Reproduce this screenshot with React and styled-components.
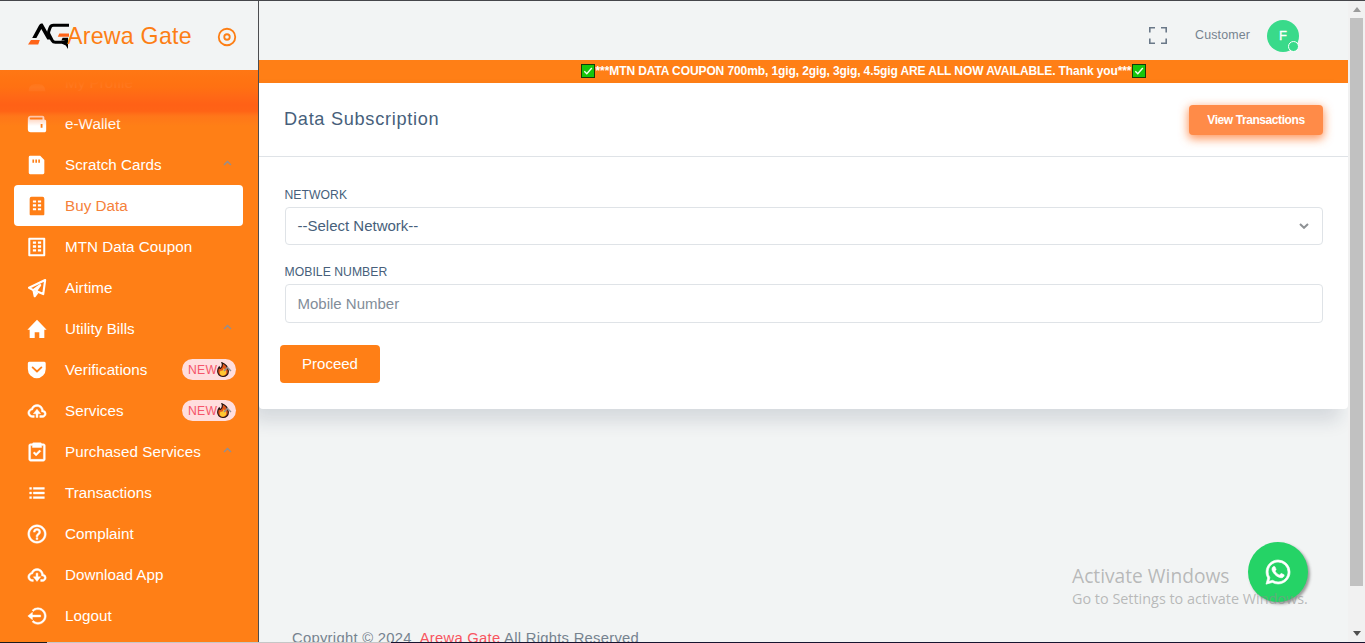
import React from 'react';
import styled, { createGlobalStyle } from 'styled-components';
import {
  BiSolidWallet, BiCloudUpload, BiCloudDownload, BiTask, BiListUl,
  BiHelpCircle, BiLogOutCircle, BiLogoWhatsapp, BiDisc, BiSolidUser,
} from 'react-icons/bi';

const Global = createGlobalStyle`
  * { box-sizing: border-box; }
  html, body { margin: 0; padding: 0; overflow: hidden; }
  body { font-family: "Liberation Sans", Arial, sans-serif; background: #f2f4f4; }
`;

const Page = styled.div`
  position: relative;
  display: flex;
  width: 1365px;
  height: 643px;
  overflow: hidden;
  background: #f2f4f4;
  border-top: 1px solid #45464a;
`;
const Sidebar = styled.aside`
  position: relative;
  z-index: 1;
  display: flex;
  flex-direction: column;
  width: 259px;
  flex: none;
  border-right: 1px solid #4c4d50;
  background: #ff7f16;
`;
const Brand = styled.div`
  display: flex;
  align-items: center;
  height: 69px;
  flex: none;
  padding: 0 20.5px 0 28px;
  background: #f2f4f4;
  color: #fd7e14;
`;
const BrandName = styled.span`
  flex: 1;
  margin-left: -2px;
  font-size: 23.2px;
  letter-spacing: 0.24px;
  line-height: 30px;
  white-space: nowrap;
`;
const ToggleSlot = styled.span`
  display: flex;
  padding-top: 2px;
`;
const MenuViewport = styled.nav`
  position: relative;
  flex: 1;
  min-height: 0;
  overflow: hidden;
`;
const MenuShade = styled.div`
  position: absolute;
  top: 0;
  left: 0;
  right: 0;
  height: 56px;
  background: linear-gradient(180deg,
    rgb(255, 119, 20) 0, rgb(255, 115, 18) 11px, rgba(255, 112, 18, 0.94) 17px, rgba(255, 104, 22, 0.98) 26px,
    rgba(255, 96, 22, 0.98) 35px, rgba(255, 97, 22, 0.92) 41px,
    rgba(255, 105, 30, 0.4) 46px, rgba(255, 127, 22, 0) 56px);
`;
const MenuList = styled.ul`
  margin: -8px 0 0;
  padding: 0 15px 0 14px;
  list-style: none;
`;
const MenuItem = styled.li`
  display: flex;
  align-items: center;
  height: 41px;
  padding: 0 7px 0 11px;
  border-radius: 4px;
  font-size: 15.2px;
  letter-spacing: 0.04px;
  color: ${p => (p.$active ? '#f5813a' : '#fff')};
  background: ${p => (p.$active ? '#fff' : 'transparent')};
  svg { flex: none; }
`;
const ItemIcon = styled.span`
  display: flex;
  width: 23px;
  justify-content: center;
  margin-right: 17px;
  color: ${p => (p.$active ? '#ff7f16' : '#fff')};
`;
const ItemLabel = styled.span`
  flex: 1;
  white-space: nowrap;
  line-height: 20px;
`;
const ChevronSlot = styled.span`
  display: flex;
  padding: 0 4px 3px 0;
`;
const NewBadge = styled.span`
  position: relative;
  display: flex;
  align-items: center;
  width: 54px;
  height: 21px;
  padding-left: 6px;
  border-radius: 11px;
  background: #ffdede;
  color: #f5566a;
  font-size: 12.2px;
  letter-spacing: 0.3px;
`;
const BadgeChevron = styled.span`
  position: absolute;
  top: 7px;
  right: 4px;
  display: flex;
`;

const Main = styled.main`
  display: flex;
  flex-direction: column;
  width: 1089px;
  flex: none;
`;
const TopBar = styled.header`
  display: flex;
  align-items: center;
  justify-content: flex-end;
  height: 59px;
  flex: none;
  padding: 10px 49px 0 0;
  color: #76838f;
`;
const Role = styled.span`
  margin: 0 17px 1px 25.5px;
  font-size: 12.4px;
  letter-spacing: 0.15px;
`;
const Avatar = styled.div`
  position: relative;
  display: grid;
  place-items: center;
  width: 32px;
  height: 32px;
  margin-top: 1px;
  padding-bottom: 2px;
  border-radius: 50%;
  background: #39da8a;
  color: #fff;
  font-size: 13px;
  -webkit-text-stroke: 0.3px #fff;
`;
const Status = styled.i`
  position: absolute;
  right: 0;
  bottom: 0;
  width: 11px;
  height: 11px;
  border: 1px solid #fff;
  border-radius: 50%;
  background: #39da8a;
`;
const Banner = styled.div`
  display: flex;
  align-items: center;
  justify-content: center;
  gap: 1px;
  height: 23px;
  flex: none;
  padding: 0 0 1px 120px;
  background: #ff7f16;
  color: #fff;
  font-size: 12px;
  font-weight: 700;
  white-space: nowrap;
`;
const BannerText = styled.span`
  letter-spacing: -0.1px;
`;
const Card = styled.section`
  height: 326px;
  flex: none;
  border-radius: 0 0 4px 4px;
  background: #fff;
  box-shadow: -8px 12px 18px 0 rgba(25, 42, 70, 0.13);
`;
const CardHeader = styled.div`
  display: flex;
  justify-content: space-between;
  align-items: flex-start;
  height: 74px;
  padding: 22px 25px 0 25px;
  border-bottom: 1px solid #dfe3e7;
`;
const CardTitle = styled.h4`
  margin: 3px 0 0;
  font-size: 18.2px;
  font-weight: 400;
  line-height: 22px;
  letter-spacing: 0.69px;
  color: #475f7b;
`;
const ViewButton = styled.button`
  width: 134px;
  height: 30px;
  padding: 0;
  border: 0;
  border-radius: 4px;
  background: #ff8b48;
  box-shadow: 0 3px 10px 1px rgba(255, 110, 30, 0.7);
  color: #fff;
  font: 700 12px "Liberation Sans", Arial, sans-serif;
  letter-spacing: -0.42px;
`;
const Form = styled.form`
  padding: 30px 25px 0 26px;
`;
const Label = styled.label`
  display: block;
  height: 20px;
  margin-left: -1px;
  padding-left: 0.5px;
  font-size: 12.2px;
  line-height: 16px;
  letter-spacing: 0.04px;
  color: #475f7b;
`;
const Field = styled.div`
  display: flex;
  align-items: center;
  justify-content: space-between;
  height: ${p => p.$height}px;
  margin-bottom: ${p => p.$gap}px;
  padding: 0 13px ${p => p.$lift || 0}px 11.5px;
  border: 1px solid #dfe3e7;
  border-radius: 4px;
  font-size: 15px;
  color: ${p => (p.$muted ? '#828d99' : '#475f7b')};
`;
const ProceedButton = styled.button`
  width: 100px;
  height: 38px;
  margin-left: -5px;
  padding: 0 0 2px;
  border: 0;
  border-radius: 4px;
  background: #ff7f16;
  color: #fff;
  font: 15px "Liberation Sans", Arial, sans-serif;
`;
const Footer = styled.footer`
  height: 14px;
  margin-top: auto;
  padding-left: 33px;
  overflow: hidden;
  font-size: 14.8px;
  letter-spacing: 0.27px;
  line-height: 19px;
  white-space: pre;
  color: #76838f;
`;
const FooterLink = styled.span`
  color: #f8545f;
`;

const ScrollTrack = styled.div`
  display: flex;
  flex-direction: column;
  align-items: center;
  width: 17px;
  padding-bottom: 5px;
  background: #f1f1f1;
`;
const ScrollThumb = styled.div`
  width: 13px;
  height: 568px;
  margin-bottom: auto;
  background: #c1c1c1;
`;
const ArrowSlot = styled.span`
  display: flex;
  align-items: center;
  height: ${p => p.$height}px;
`;

const Chat = styled.div`
  position: absolute;
  left: 1248px;
  top: 541px;
  display: grid;
  place-items: center;
  width: 60px;
  height: 60px;
  border-radius: 50%;
  background: #25d366;
  box-shadow: 2px 2px 3px #999;
  color: #fff;
  svg { stroke: #fff; stroke-width: 0.5px; }
`;
const Watermark = styled.div`
  position: absolute;
  left: 1072px;
  top: 562px;
  font-family: "Open Sans", "Noto Sans", sans-serif;
  color: rgba(140, 140, 140, 0.58);
  white-space: nowrap;
`;
const WatermarkTitle = styled.div`
  font-size: 19.2px;
  line-height: 26px;
`;
const WatermarkText = styled.div`
  font-size: 14.4px;
  line-height: 20px;
`;
const BottomEdge = styled.div`
  position: absolute;
  z-index: 2;
  left: 0;
  right: 0;
  bottom: 0;
  height: 1px;
  background: linear-gradient(90deg, #1c1c1c 47px, #c6c6c6 47px, #c6c6c6 391px, #17142f 391px);
`;

const Logo = () => (
  <svg width="41" height="27" viewBox="0 0 41 27">
    <path d="M4.2 16L10.8 3.8Q12 1.5 13.4 1.5H14.6L23.5 17.5H19.3L13.3 7L8.4 16Z" fill="#000" />
    <path d="M41 3.2H25.5Q23 3.2 22.1 5.5L20.7 9.4Q20.2 11 21.1 12.6L24.2 18.4Q25.2 20.2 27.4 20.2H39" fill="none" stroke="#000" strokeWidth="3.1" />
    <path d="M34 20H40V27L37.8 23.5L34 21.7ZM34.6 15.7H40V21H37L36.4 18.6H33.4Z" fill="#000" />
    <path d="M31.3 11.4H41V14.8H29.8ZM3 18H11.8L10.2 22.5H0Z" fill="#ff6418" />
  </svg>
);
const FullscreenIcon = () => (
  <svg width="24" height="24" viewBox="0 0 24 24" fill="none" stroke="#6a7888" strokeWidth="1.6"><path d="M3.8 8.5V3.8H9M15 3.8H20.2V8.5M20.2 14.5V19.2H15M9 19.2H3.8V14.5" /></svg>
);
const Chevron = () => (
  <svg width="9" height="6" viewBox="0 0 9 6" fill="none" stroke="#8f8f94" strokeWidth="1.4"><path d="M1 5L4.5 1.5L8 5" /></svg>
);
const CheckMark = () => (
  <svg width="14" height="14" viewBox="0 0 14 14"><rect x=".5" y=".5" width="13" height="13" fill="#16c60c" stroke="#123d08" /><path d="M3.3 7.2L5.8 9.8L10.8 4" fill="none" stroke="#f2fff0" strokeWidth="1.4" /></svg>
);
const Flame = () => (
  <svg width="12" height="15" viewBox="0 0 12 15">
    <path d="M5 .7C8.5 2 11 5.5 11.3 9C11.5 12.5 9 14.4 6 14.4C2.5 14.4.6 12 .7 9C.8 7 1.5 5.8 2.2 5C2.5 6 3 6.5 3.6 6.4C5.2 5 5.8 3 5 .7Z" fill="#e0561c" stroke="#251410" strokeWidth="1.2" />
    <path d="M6.5 6C9 8 9.5 9.5 9.2 11C8.8 13 7.4 13.7 6 13.7C4 13.7 2.8 12.4 2.8 10.7C2.8 9.6 3.3 8.8 4 8.4C5 9.5 6.5 8 6.5 6Z" fill="#ffc831" />
  </svg>
);
const MemoryCard = () => (
  <svg width="22" height="22" viewBox="0 0 24 24" fill="currentColor"><path fillRule="evenodd" d="M4.5 2H15.5L20 6.5V20.5a1.5 1.5 0 0 1-1.5 1.5H4.5a1.5 1.5 0 0 1-1.5-1.5V3.5a1.5 1.5 0 0 1 1.5-1.5ZM7 6V9.5H8.8V6ZM10.2 6V9.5H12V6ZM13.4 6V9.5H15.2V6Z" /></svg>
);
const BuildingSolid = () => (
  <svg width="22" height="22" viewBox="0 0 24 24" fill="currentColor"><path fillRule="evenodd" d="M6 2H18a2 2 0 0 1 2 2V21a1 1 0 0 1-1 1H5a1 1 0 0 1-1-1V4a2 2 0 0 1 2-2ZM7.5 6V8.3H11V6ZM13 6V8.3H16.5V6ZM7.5 10.2V12.5H11V10.2ZM13 10.2V12.5H16.5V10.2ZM7.5 14.4V16.7H11V14.4ZM13 14.4V16.7H16.5V14.4Z" /></svg>
);
const BuildingOutline = () => (
  <svg width="22" height="22" viewBox="0 0 24 24" fill="currentColor"><path fillRule="evenodd" d="M3.5 2H20a1 1 0 0 1 1 1V21a1 1 0 0 1-1 1H3.5a1 1 0 0 1-1-1V3a1 1 0 0 1 1-1ZM4.7 4V20H18.8V4ZM7.5 6H11V8.5H7.5ZM13 6H16.5V8.5H13ZM7.5 10.2H11V12.7H7.5ZM13 10.2H16.5V12.7H13ZM7.5 14.4H11V16.9H7.5ZM13 14.4H16.5V16.9H13Z" /></svg>
);
const Plane = () => (
  <svg width="22" height="22" viewBox="0 0 24 24" fill="none" stroke="currentColor" strokeWidth="2.3" strokeLinejoin="round"><path d="M20.9 3.3L3.3 11.8L8 14.3L15.5 8.8L11 15.2L18.8 18.6Z" /><path d="M8 14L9.5 21L12.5 17" fill="currentColor" /></svg>
);
const House = () => (
  <svg width="22" height="22" viewBox="0 0 24 24" fill="currentColor"><path d="M12 1.8L22.5 12.8H20V21.8H14.5V15.5H9.5V21.8H4V12.8H1.5Z" /></svg>
);
const Pocket = () => (
  <svg width="22" height="22" viewBox="0 0 24 24"><path d="M3.5 3H20A1.6 1.6 0 0 1 21.5 4.6V11a9.75 10 0 0 1-19.5 0V4.6A1.6 1.6 0 0 1 3.5 3Z" fill="currentColor" /><path d="M7.2 9.2L12 13.6L16.8 9.2" fill="none" stroke="#ff7f16" strokeWidth="2" strokeLinecap="round" strokeLinejoin="round" /></svg>
);

const OutlineIcon = styled.span`
  display: flex;
  svg { stroke-width: 0.5px; stroke: currentColor; }
`;
const bold = Icon => ({ size }) => <OutlineIcon><Icon size={size} /></OutlineIcon>;

const items = [
  { label: 'My Profile', icon: BiSolidUser },
  { label: 'e-Wallet', icon: BiSolidWallet },
  { label: 'Scratch Cards', icon: MemoryCard, expandable: true },
  { label: 'Buy Data', icon: BuildingSolid, active: true },
  { label: 'MTN Data Coupon', icon: BuildingOutline },
  { label: 'Airtime', icon: Plane },
  { label: 'Utility Bills', icon: House, expandable: true },
  { label: 'Verifications', icon: Pocket, isNew: true },
  { label: 'Services', icon: bold(BiCloudUpload), isNew: true },
  { label: 'Purchased Services', icon: bold(BiTask), expandable: true },
  { label: 'Transactions', icon: bold(BiListUl) },
  { label: 'Complaint', icon: bold(BiHelpCircle) },
  { label: 'Download App', icon: bold(BiCloudDownload) },
  { label: 'Logout', icon: bold(BiLogOutCircle) },
];

export default function App() {
  return (
    <>
      <Global />
      <Page>
        <Sidebar>
          <Brand>
            <Logo />
            <BrandName>Arewa Gate</BrandName>
            <ToggleSlot><BiDisc size={22} /></ToggleSlot>
          </Brand>
          <MenuViewport>
            <MenuList>
              {items.map(({ label, icon: Icon, active, expandable, isNew }) => (
                <MenuItem key={label} $active={active}>
                  <ItemIcon $active={active}><Icon size={22} /></ItemIcon>
                  <ItemLabel>{label}</ItemLabel>
                  {expandable && <ChevronSlot><Chevron /></ChevronSlot>}
                  {isNew && <NewBadge>NEW<Flame /><BadgeChevron><Chevron /></BadgeChevron></NewBadge>}
                </MenuItem>
              ))}
            </MenuList>
            <MenuShade />
          </MenuViewport>
        </Sidebar>
        <Main>
          <TopBar>
            <FullscreenIcon />
            <Role>Customer</Role>
            <Avatar>F<Status /></Avatar>
          </TopBar>
          <Banner>
            <CheckMark />
            <BannerText>***MTN DATA COUPON 700mb, 1gig, 2gig, 3gig, 4.5gig ARE ALL NOW AVAILABLE. Thank you***</BannerText>
            <CheckMark />
          </Banner>
          <Card>
            <CardHeader>
              <CardTitle>Data Subscription</CardTitle>
              <ViewButton>View Transactions</ViewButton>
            </CardHeader>
            <Form>
              <Label>NETWORK</Label>
              <Field $height={38} $gap={19} $lift={1}>
                --Select Network--
                <svg width="10" height="7" viewBox="0 0 10 7" fill="none" stroke="#8e9194" strokeWidth="2"><path d="M1 2L5 5.8L9 2" /></svg>
              </Field>
              <Label>MOBILE NUMBER</Label>
              <Field $height={39} $gap={22} $muted>Mobile Number</Field>
              <ProceedButton type="button">Proceed</ProceedButton>
            </Form>
          </Card>
          <Footer>Copyright © 2024  <FooterLink>Arewa Gate</FooterLink> All Rights Reserved</Footer>
        </Main>
        <ScrollTrack>
          <ArrowSlot $height={17}><svg width="8" height="5"><path d="M4 0L8 5H0Z" fill="#9b9b9b" /></svg></ArrowSlot>
          <ScrollThumb />
          <ArrowSlot $height={10}><svg width="8" height="5"><path d="M4 5L8 0H0Z" fill="#505050" /></svg></ArrowSlot>
        </ScrollTrack>
        <Chat><BiLogoWhatsapp size={32} /></Chat>
        <Watermark>
          <WatermarkTitle>Activate Windows</WatermarkTitle>
          <WatermarkText>Go to Settings to activate Windows.</WatermarkText>
        </Watermark>
        <BottomEdge />
      </Page>
    </>
  );
}
